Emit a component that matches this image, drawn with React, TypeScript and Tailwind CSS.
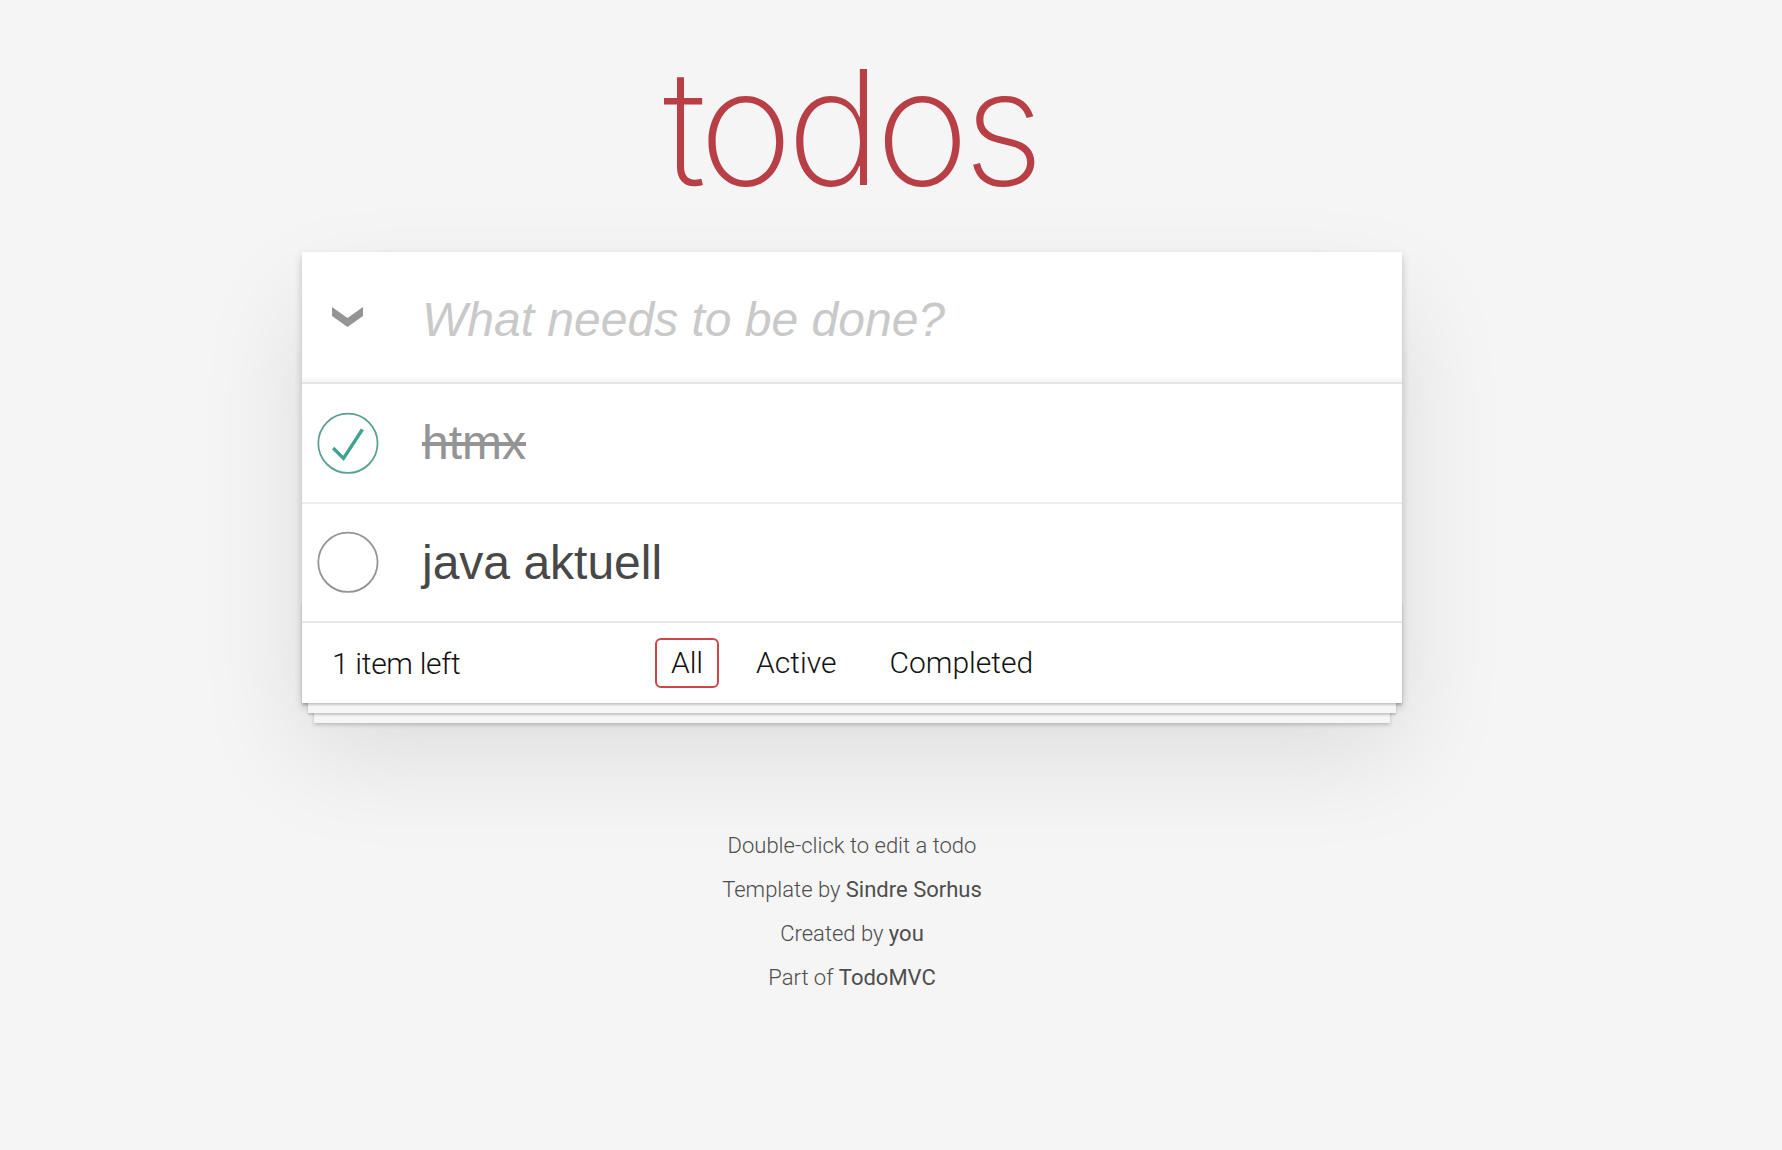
import React from "react";

interface Todo {
  id: number;
  title: string;
  completed: boolean;
}

const todos: Todo[] = [
  { id: 1, title: "htmx", completed: true },
  { id: 2, title: "java aktuell", completed: false },
];

const filters = ["All", "Active", "Completed"];

const ToggleIcon: React.FC<{ checked: boolean }> = ({ checked }) => (
  <svg width="80" height="80" viewBox="-10 -18 100 135" className="shrink-0">
    <circle
      cx="50"
      cy="50"
      r="50"
      fill="none"
      stroke={checked ? "#59A193" : "#949494"}
      strokeWidth="3"
    />
    {checked && <path d="M72 25L42 71 27 56l-4 4 20 20 34-52z" fill="#3EA390" />}
  </svg>
);

const TodoItem: React.FC<{ todo: Todo; last: boolean }> = ({ todo, last }) => (
  <li
    className={`flex items-center ${last ? "" : "border-b-2 border-[#ededed]"}`}
  >
    <ToggleIcon checked={todo.completed} />
    <label
      className={`ml-[40px] py-[30px] text-[48px] leading-[1.2] font-normal font-['Liberation_Sans',Arial,sans-serif] ${
        todo.completed ? "text-[#949494] line-through" : "text-[#484848]"
      }`}
    >
      {todo.title}
    </label>
  </li>
);

export default function App() {
  return (
    <div className="min-h-screen bg-[#f5f5f5] text-[#111111] font-['Roboto',sans-serif] font-light pb-[60px]">
      <div className="ml-[302px] w-[1100px]">
        <h1 className="pt-[47px] pr-[3px] text-center text-[160px] leading-[160px] tracking-[-6px] font-extralight text-[#b83f45] font-['Inter',sans-serif]">
          todos
        </h1>

        <section className="mt-[45px] bg-white shadow-[0_4px_8px_0_rgba(0,0,0,0.2),0_50px_100px_0_rgba(0,0,0,0.1)]">
          <header className="flex items-center h-[130px] shadow-[inset_0_-4px_2px_rgba(0,0,0,0.03)]">
            <div className="w-[90px] flex justify-center">
              <svg width="31" height="20" viewBox="0 0 31 20">
                <polygon points="0,0 15.5,11 31,0 31,9 15.5,20 0,9" fill="#949494" />
              </svg>
            </div>
            <span className="ml-[30px] mt-[5px] text-[48px] leading-[1.4] italic font-normal text-[#c9c9c9] font-['Liberation_Sans',Arial,sans-serif]">
              What needs to be done?
            </span>
          </header>

          <ul className="border-t-2 border-[#e6e6e6]">
            {todos.map((todo, i) => (
              <TodoItem key={todo.id} todo={todo} last={i === todos.length - 1} />
            ))}
          </ul>

          <footer className="relative grid grid-cols-[1fr_auto_1fr] items-center h-[82px] px-[30px] border-t-2 border-[#e6e6e6] text-[30px]">
            <div className="absolute left-0 right-0 bottom-0 h-[100px] overflow-hidden pointer-events-none shadow-[0_2px_2px_rgba(0,0,0,0.2),0_16px_0_-6px_#f6f6f6,0_18px_2px_-6px_rgba(0,0,0,0.2),0_32px_0_-12px_#f6f6f6,0_34px_4px_-12px_rgba(0,0,0,0.2)]" />
            <span className="leading-[39px] tracking-[-0.3px]">1 item left</span>
            <ul className="flex items-center gap-[9px]">
              {filters.map((f) => (
                <li key={f}>
                  <a
                    className={`block mx-[6px] px-[14px] py-[6px] border-2 rounded-[6px] leading-[34px] ${
                      f === "All" ? "border-[#ce4646]" : "border-transparent"
                    }`}
                  >
                    {f}
                  </a>
                </li>
              ))}
            </ul>
            <span />
          </footer>
        </section>

        <div className="mt-[132px] text-center text-[22px] leading-none text-[#4d4d4d]">
          <p className="mb-[22px]">Double-click to edit a todo</p>
          <p className="mb-[22px]">
            Template by <a className="font-normal">Sindre Sorhus</a>
          </p>
          <p className="mb-[22px]">
            Created by <a className="font-normal">you</a>
          </p>
          <p>
            Part of <a className="font-normal">TodoMVC</a>
          </p>
        </div>
      </div>
    </div>
  );
}
